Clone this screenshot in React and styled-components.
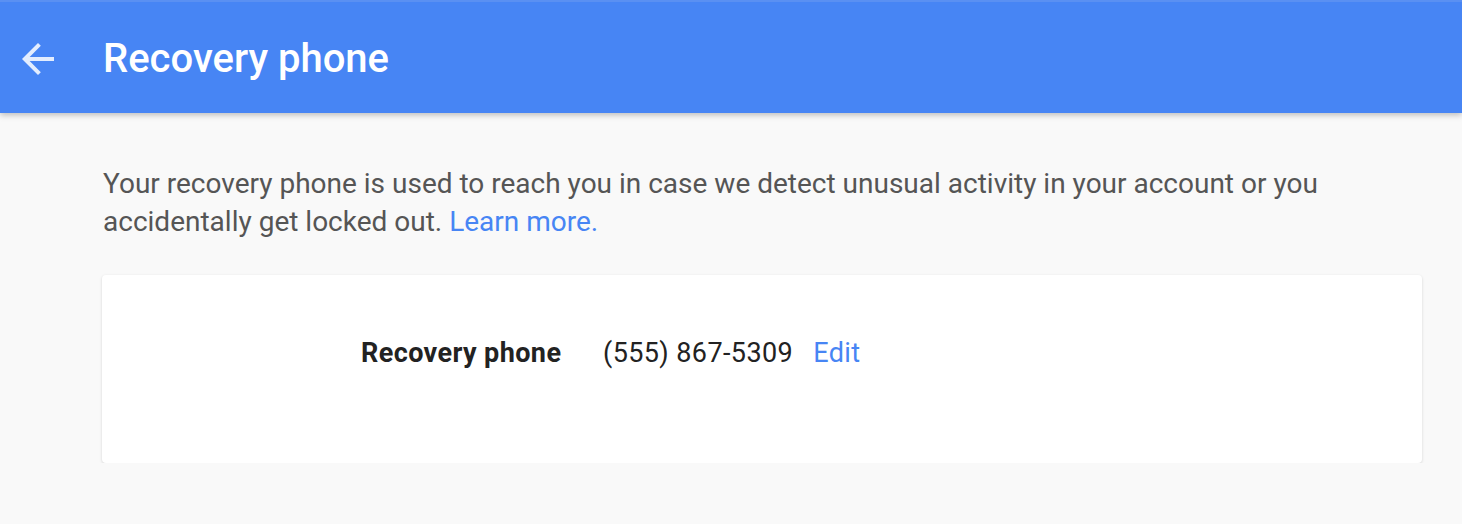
import styled, { createGlobalStyle } from "styled-components"

const GlobalStyle = createGlobalStyle`
    html, body {
        margin: 0;
        padding: 0;
        background: #f9f9f9;
        font-family: Roboto, "Liberation Sans", sans-serif;
    }
`

const BackIcon = () => (
    <svg width="48" height="48" viewBox="0 0 24 24">
        <path d="M20 11H7.83l5.59-5.59L12 4l-8 8 8 8 1.41-1.41L7.83 13H20v-2z" fill="currentColor" />
    </svg>
)

export default function App() {
    return (
        <>
            <GlobalStyle />
            <Header>
                <BackButton aria-label="Back">
                    <BackIcon />
                </BackButton>
                <Title>Recovery phone</Title>
            </Header>
            <Main>
                <Intro>
                    Your recovery phone is used to reach you in case we detect unusual activity in your account or you
                    accidentally get locked out. <Link href="#">Learn more.</Link>
                </Intro>
                <Card>
                    <Row>
                        <Label>Recovery phone</Label>
                        <Value>(555) 867-5309</Value>
                        <Link href="#">Edit</Link>
                    </Row>
                </Card>
            </Main>
        </>
    )
}

const Header = styled.header`
    height: 113px;
    background: #4785f4;
    display: flex;
    align-items: center;
    box-shadow: 0 2px 6px rgba(0, 0, 0, 0.25);
    position: relative;
    border-top: 2px solid #5a90f2;
    box-sizing: border-box;
`

const BackButton = styled.button`
    background: none;
    border: none;
    padding: 0;
    margin-left: 14px;
    width: 48px;
    height: 48px;
    color: rgba(255, 255, 255, 0.85);
    display: flex;
    margin-top: 2px;
`

const Title = styled.h1`
    margin: 2px 0 0 41px;
    color: #fff;
    font-size: 40px;
    font-weight: 500;
`

const Main = styled.main`
    padding: 52px 40px 0 102px;
`

const Intro = styled.p`
    margin: 0 0 34px 1px;
    font-size: 28px;
    line-height: 38px;
    color: #555;
    max-width: 1240px;
`

const Link = styled.a`
    color: #4785f4;
    text-decoration: none;
`

const Card = styled.section`
    background: #fff;
    border-radius: 4px;
    box-shadow: 0 1px 3px rgba(0, 0, 0, 0.15);
    height: 188px;
    display: flex;
    align-items: center;
`

const Row = styled.div`
    display: flex;
    align-items: baseline;
    padding-left: 259px;
    margin-top: -32px;
    font-size: 27px;
    letter-spacing: 0.4px;
`

const Label = styled.span`
    font-weight: 700;
    color: #222;
    width: 242px;
`

const Value = styled.span`
    color: #222;
    margin-right: 20px;
`
